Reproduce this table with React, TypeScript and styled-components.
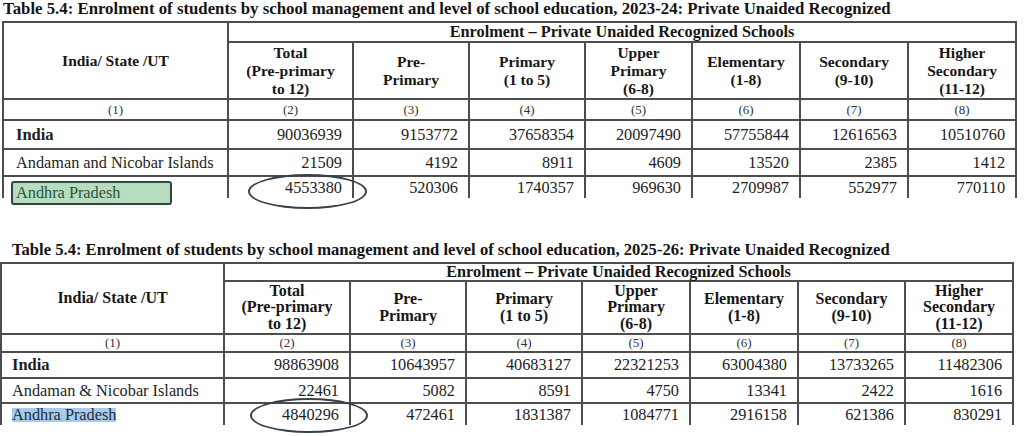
import styled, { createGlobalStyle } from "styled-components";

const GlobalStyle = createGlobalStyle`
  body {
    margin: 0;
    background: #ffffff;
    font-family: "Liberation Serif", "Times New Roman", serif;
    color: #1c1c1c;
  }
`;

type Row = { name: string; values: number[]; bold?: boolean; marker?: "box" | "select" };

type Metrics = {
  left: number;
  titleIndent: number;
  titleSize: number;
  cols: number[];
  rows: number[];
  headSize: number;
  headLine: number;
  namePad: number;
  oval: { left: number; top: number; width: number; height: number };
};

const serif = `"Liberation Serif", "Times New Roman", serif`;

const Page = styled.main`
  width: 1024px;
  height: 436px;
  overflow: hidden;
  display: flex;
  flex-direction: column;
  gap: 43px;
  font-family: ${serif};
`;

const Section = styled.section`
  display: flex;
  flex-direction: column;
`;

const Title = styled.h2<{ $indent: number; $size: number }>`
  margin: 0 0 4px;
  padding-left: ${(p) => p.$indent}px;
  font-family: ${serif};
  font-size: ${(p) => p.$size}px;
  line-height: 17px;
  font-weight: bold;
  white-space: nowrap;
  color: #141414;
`;

const Table = styled.table<{ $left: number }>`
  border-collapse: collapse;
  table-layout: fixed;
  margin-left: ${(p) => p.$left}px;
  border: 2px solid #4d4d4d;
  border-bottom: none;
  font-family: ${serif};
`;

const Tr = styled.tr<{ $h: number }>`
  height: ${(p) => p.$h}px;
`;

const Head = styled.th<{ $size: number; $line: number }>`
  border: 2px solid #4d4d4d;
  padding: 0;
  font-family: ${serif};
  font-size: ${(p) => p.$size}px;
  line-height: ${(p) => p.$line}px;
  font-weight: bold;
  text-align: center;
  vertical-align: middle;
  color: #161616;
`;

const GroupHead = styled(Head)`
  font-size: 16.3px;
  line-height: 16px;
`;

const IndexCell = styled.td`
  border: 2px solid #4d4d4d;
  padding: 0;
  font-family: ${serif};
  font-size: 13px;
  line-height: 14px;
  text-align: center;
  color: #333;
`;

const NameCell = styled.td<{ $bold?: boolean; $pad: number; $last?: boolean }>`
  position: relative;
  border: 2px solid #4d4d4d;
  border-bottom: ${(p) => (p.$last ? "none" : "2px solid #4d4d4d")};
  padding: 0 0 0 ${(p) => p.$pad}px;
  font-family: ${serif};
  font-size: ${(p) => (p.$bold ? 16.5 : 16.3)}px;
  font-weight: ${(p) => (p.$bold ? "bold" : "normal")};
  white-space: nowrap;
  color: #1e1e1e;
`;

const NumCell = styled.td<{ $last?: boolean }>`
  position: relative;
  border: 2px solid #4d4d4d;
  border-bottom: ${(p) => (p.$last ? "none" : "2px solid #4d4d4d")};
  padding: 0 10px 0 0;
  font-family: ${serif};
  font-size: 16.3px;
  text-align: right;
  white-space: nowrap;
  color: #222;
`;

const GreenBox = styled.span`
  position: absolute;
  left: 7px;
  top: 4px;
  box-sizing: border-box;
  width: 161px;
  height: 24px;
  padding-left: 3px;
  border: 2px solid #2f4a3c;
  border-radius: 3px;
  background: #b7dcc0;
  color: #2b5638;
  line-height: 20px;
`;

const Selected = styled.span`
  display: inline-block;
  height: 14px;
  line-height: 14px;
  background: #a7cbe8;
  color: #1f2d3d;
`;

const Oval = styled.span`
  position: absolute;
  box-sizing: border-box;
  border: 2px solid #34414e;
  border-radius: 50%;
  pointer-events: none;
`;

const heads = [
  ["Total", "(Pre-primary", "to 12)"],
  ["Pre-", "Primary"],
  ["Primary", "(1 to 5)"],
  ["Upper", "Primary", "(6-8)"],
  ["Elementary", "(1-8)"],
  ["Secondary", "(9-10)"],
  ["Higher", "Secondary", "(11-12)"],
];

const EnrolmentTable = ({ year, rows, m }: { year: string; rows: Row[]; m: Metrics }) => {
  const [hGroup, hHead, hIndex, ...hData] = m.rows;
  return (
    <Section>
      <Title $indent={m.titleIndent} $size={m.titleSize}>
        Table 5.4: Enrolment of students by school management and level of school education, {year}: Private
        Unaided Recognized
      </Title>
      <Table $left={m.left} style={{ width: m.cols.reduce((a, b) => a + b, 0) }}>
        <colgroup>
          {m.cols.map((w, i) => (
            <col key={i} style={{ width: w }} />
          ))}
        </colgroup>
        <thead>
          <Tr $h={hGroup}>
            <Head rowSpan={2} $size={m.headSize} $line={m.headLine}>
              India/ State /UT
            </Head>
            <GroupHead colSpan={7} $size={m.headSize} $line={m.headLine}>
              Enrolment – Private Unaided Recognized Schools
            </GroupHead>
          </Tr>
          <Tr $h={hHead}>
            {heads.map((lines, i) => (
              <Head key={i} $size={m.headSize} $line={m.headLine}>
                {lines.map((l, j) => (
                  <div key={j}>{l}</div>
                ))}
              </Head>
            ))}
          </Tr>
        </thead>
        <tbody>
          <Tr $h={hIndex}>
            {Array.from({ length: 8 }, (_, i) => (
              <IndexCell key={i}>({i + 1})</IndexCell>
            ))}
          </Tr>
          {rows.map((r, ri) => {
            const last = ri === rows.length - 1;
            return (
              <Tr key={r.name} $h={hData[ri]}>
                <NameCell $bold={r.bold} $pad={m.namePad} $last={last}>
                  {r.marker === "box" && <GreenBox>{r.name}</GreenBox>}
                  {r.marker === "select" && <Selected>{r.name}</Selected>}
                  {!r.marker && r.name}
                </NameCell>
                {r.values.map((v, vi) => (
                  <NumCell key={vi} $last={last}>
                    {v}
                    {r.marker && vi === 0 && (
                      <Oval
                        style={{ left: m.oval.left, top: m.oval.top, width: m.oval.width, height: m.oval.height }}
                      />
                    )}
                  </NumCell>
                ))}
              </Tr>
            );
          })}
        </tbody>
      </Table>
    </Section>
  );
};

const rows2324: Row[] = [
  { name: "India", bold: true, values: [90036939, 9153772, 37658354, 20097490, 57755844, 12616563, 10510760] },
  { name: "Andaman and Nicobar Islands", values: [21509, 4192, 8911, 4609, 13520, 2385, 1412] },
  { name: "Andhra Pradesh", marker: "box", values: [4553380, 520306, 1740357, 969630, 2709987, 552977, 770110] },
];

const rows2526: Row[] = [
  { name: "India", bold: true, values: [98863908, 10643957, 40683127, 22321253, 63004380, 13733265, 11482306] },
  { name: "Andaman & Nicobar Islands", values: [22461, 5082, 8591, 4750, 13341, 2422, 1616] },
  { name: "Andhra Pradesh", marker: "select", values: [4840296, 472461, 1831387, 1084771, 2916158, 621386, 830291] },
];

const first: Metrics = {
  left: 2,
  titleIndent: 3,
  titleSize: 16.8,
  cols: [225, 125, 116, 116, 107, 108, 108, 108],
  rows: [20, 57, 21, 29, 27, 22],
  headSize: 15.5,
  headLine: 18,
  namePad: 12,
  oval: { left: 19, top: -3, width: 119, height: 35 },
};

const second: Metrics = {
  left: 0,
  titleIndent: 12,
  titleSize: 16.6,
  cols: [223, 126, 116, 116, 108, 108, 107, 108],
  rows: [18, 53, 18, 26, 25, 22],
  headSize: 16,
  headLine: 16.5,
  namePad: 10,
  oval: { left: 25, top: -6, width: 118, height: 35 },
};

export default function App() {
  return (
    <>
      <GlobalStyle />
      <Page>
        <EnrolmentTable year="2023-24" rows={rows2324} m={first} />
        <EnrolmentTable year="2025-26" rows={rows2526} m={second} />
      </Page>
    </>
  );
}
